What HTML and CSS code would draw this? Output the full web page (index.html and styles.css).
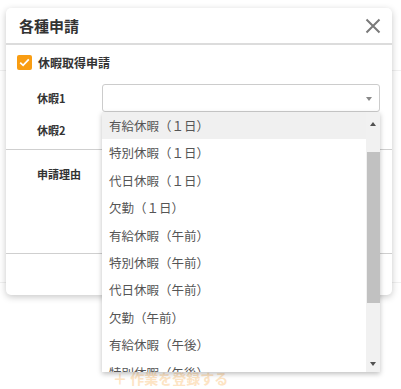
FILE: index.html
```html
<!DOCTYPE html>
<html lang="ja">
<head>
<meta charset="utf-8">
<link rel="stylesheet" href="styles.css">
</head>
<body>
<div class="page">
  <div class="bg-row bg-row-1"></div>
  <div class="bg-row bg-row-2"></div>
  <div class="bg-add">＋ 作業を登録する</div>
</div>

<div class="modal">
  <div class="modal-header">
    <h1 class="modal-title">各種申請</h1>
    <svg class="close" width="16" height="16" viewBox="0 0 16 16"><path d="M1.5 1.5 L14.5 14.5 M14.5 1.5 L1.5 14.5" stroke="#7a7a7a" stroke-width="2" fill="none"/></svg>
  </div>
  <div class="section section-leave">
    <div class="check-row">
      <span class="checkbox"><svg width="11" height="9" viewBox="0 0 11 9"><path d="M1.2 4.6 L4.1 7.3 L9.8 1.4" stroke="#fff" stroke-width="1.8" fill="none"/></svg></span>
      <span class="check-label">休暇取得申請</span>
    </div>
    <div class="field-row">
      <span class="field-label">休暇1</span>
      <div class="select"><span class="select-arrow"></span></div>
    </div>
    <div class="field-row">
      <span class="field-label">休暇2</span>
    </div>
  </div>
  <div class="section section-reason">
    <span class="field-label">申請理由</span>
  </div>
  <div class="modal-footer"></div>
</div>

<div class="dropdown">
  <ul class="options">
    <li class="option active">有給休暇（１日）</li>
    <li class="option">特別休暇（１日）</li>
    <li class="option">代日休暇（１日）</li>
    <li class="option">欠勤（１日）</li>
    <li class="option">有給休暇（午前）</li>
    <li class="option">特別休暇（午前）</li>
    <li class="option">代日休暇（午前）</li>
    <li class="option">欠勤（午前）</li>
    <li class="option">有給休暇（午後）</li>
    <li class="option">特別休暇（午後）</li>
  </ul>
  <div class="scrollbar">
    <span class="sb-up"></span>
    <span class="sb-thumb"></span>
    <span class="sb-down"></span>
  </div>
</div>
</body>
</html>
```

FILE: styles.css
```css
* { box-sizing: border-box; }
html, body {
  margin: 0;
  padding: 0;
  width: 401px;
  height: 389px;
  overflow: hidden;
  background: #fff;
  font-family: "Noto Sans CJK JP", "Noto Sans", sans-serif;
  color: #333;
}
.page {
  position: relative;
  width: 401px;
  height: 389px;
}
.bg-row {
  position: absolute;
  left: 0;
  right: 0;
  height: 1px;
  background: #f0f0f0;
}
.bg-row-1 { top: 70px; }
.bg-row-2 { top: 282px; }
.bg-add {
  position: absolute;
  left: 113px;
  top: 367px;
  font-size: 14px;
  font-weight: 700;
  color: #fde4c4;
  line-height: 22px;
}

.modal {
  position: absolute;
  left: 6px;
  top: 8px;
  width: 386px;
  height: 287px;
  background: #fff;
  border-radius: 5px;
  box-shadow: 0 2px 7px rgba(0,0,0,0.22);
  display: flex;
  flex-direction: column;
}
.modal-header {
  height: 37px;
  display: flex;
  align-items: center;
  justify-content: space-between;
  padding: 0 11px 0 13px;
  border-bottom: 2px solid #dcdcdc;
}
.modal-title {
  margin: 0;
  font-size: 15px;
  font-weight: 700;
  color: #333;
  line-height: 20px;
}
.close { display: block; }

.section-leave {
  height: 105px;
  border-bottom: 1px solid #cfcfcf;
  padding: 9px 0 0 11px;
}
.check-row {
  display: flex;
  align-items: center;
  height: 16px;
  gap: 6px;
}
.checkbox {
  width: 15px;
  height: 15px;
  border-radius: 2px;
  background: #f99d12;
  display: flex;
  align-items: center;
  justify-content: center;
}
.check-label {
  font-size: 12px;
  font-weight: 700;
  color: #333;
}
.field-row {
  display: flex;
  align-items: center;
  height: 29px;
  margin-top: 13px;
}
.field-row + .field-row { margin-top: 3px; }
.field-label {
  width: 85px;
  flex: none;
  padding-left: 20px;
  font-size: 11px;
  font-weight: 700;
  color: #333;
}
.select {
  position: relative;
  width: 278px;
  height: 28px;
  border: 1px solid #cccccc;
  border-radius: 3px;
  background: #fff;
}
.select-arrow {
  position: absolute;
  right: 7px;
  top: 12px;
  width: 0;
  height: 0;
  border-left: 3px solid transparent;
  border-right: 3px solid transparent;
  border-top: 4px solid #888;
}
.section-reason {
  height: 104px;
  border-bottom: 1px solid #cfcfcf;
  padding: 10px 0 0 11px;
  display: block;
}
.section-reason .field-label { display: inline-block; width: auto; }
.modal-footer { flex: 1; }

.dropdown {
  position: absolute;
  left: 102px;
  top: 112px;
  width: 278px;
  height: 260px;
  background: #fff;
  box-shadow: 0 2px 5px rgba(0,0,0,0.25);
  overflow: hidden;
  display: flex;
}
.options {
  list-style: none;
  margin: 0;
  padding: 0;
  flex: 1;
}
.option {
  height: 27.4px;
  line-height: 27.4px;
  padding-left: 7px;
  font-size: 12.5px;
  color: #555;
  white-space: nowrap;
}
.option.active { background: #f0f0f0; }
.scrollbar {
  position: relative;
  width: 14px;
  background: #f1f1f1;
}
.sb-up, .sb-down {
  position: absolute;
  left: 4px;
  width: 0;
  height: 0;
  border-left: 3px solid transparent;
  border-right: 3px solid transparent;
}
.sb-up { top: 10px; border-bottom: 4px solid #505050; }
.sb-down { bottom: 6px; border-top: 4px solid #505050; }
.sb-thumb {
  position: absolute;
  left: 1px;
  right: 0;
  top: 40px;
  height: 151px;
  background: #c1c1c1;
}
```
